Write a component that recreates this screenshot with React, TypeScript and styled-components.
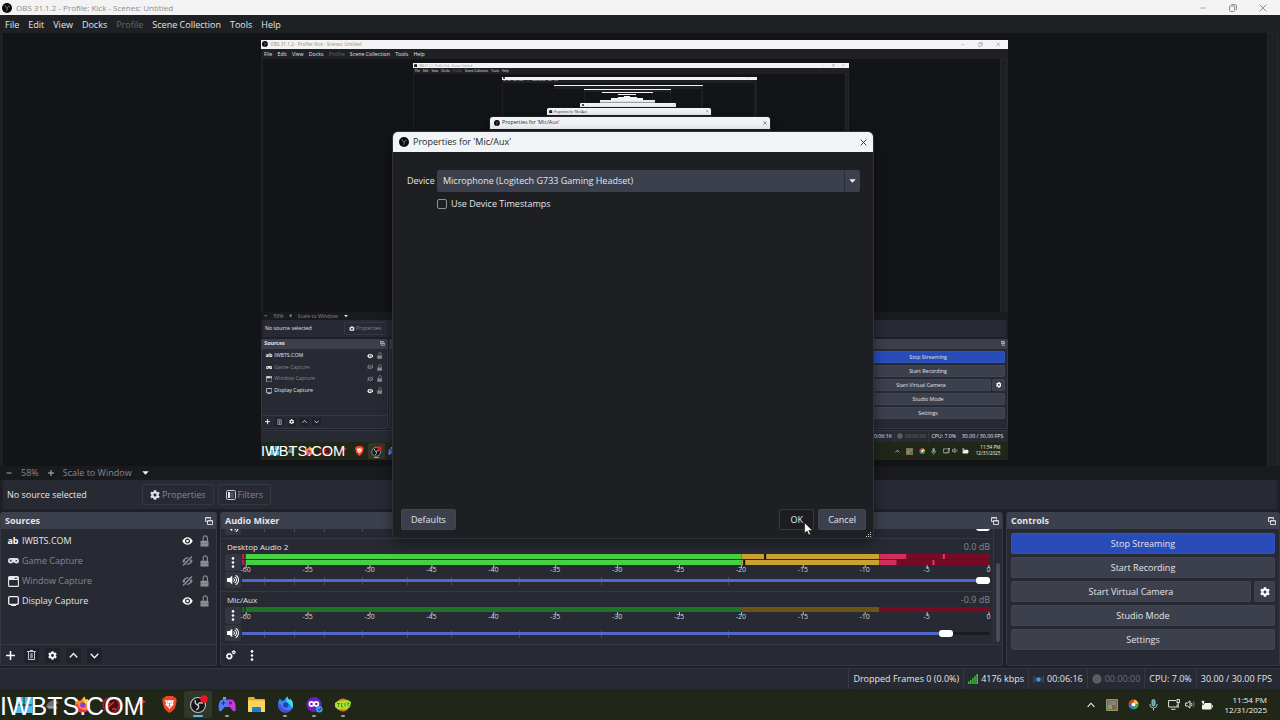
import React from "react";
import styled, { createGlobalStyle, css } from "styled-components";
import { FaCog, FaVolumeUp } from "react-icons/fa";

const c = {
  text: "#e4e5e9",
  dim: "#85878e",
  panel: "#272a33",
  raised: "#3c404d",
  line: "#353842",
  gap: "#1e2027",
  canvas: "#131418",
  menu: "#1e2024",
  accent: "#284cb8",
  slider: "#5267cb",
};

const GlobalStyle = createGlobalStyle`
  *, *::before, *::after { box-sizing: border-box; }
  body {
    margin: 0;
    background: ${c.gap};
    font-family: "Open Sans", "Noto Sans", sans-serif;
  }
  button, input, select { font: inherit; color: inherit; margin: 0; }
`;

/* ---------- desktop frame ---------- */

const Screen = styled.div<{ $nested: boolean }>`
  position: relative;
  display: flex;
  flex-direction: column;
  overflow: hidden;
  background: ${c.gap};
  color: ${c.text};
  font-size: 9px;
  line-height: 12px;
  ${(p) =>
    p.$nested
      ? css`
          width: 1280px;
          height: 720px;
          zoom: 0.5836;
        `
      : css`
          min-height: 100vh;
        `}
`;

const TitleBar = styled.header`
  display: flex;
  align-items: center;
  height: 15px;
  padding: 0 12px 0 2px;
  gap: 4px;
  background: #f3f3f3;
  color: #8b8b8b;
  font-size: 8px;
`;

const TitleText = styled.span`
  flex: 1;
  white-space: nowrap;
`;

const WindowButtons = styled.div`
  display: flex;
  gap: 20px;
`;

const BareButton = styled.button`
  display: flex;
  align-items: center;
  justify-content: center;
  min-width: 10px;
  padding: 0;
  border: 0;
  background: none;
`;

const MenuBar = styled.nav`
  display: flex;
  align-items: center;
  gap: 9px;
  height: 18px;
  padding: 1px 5px 0;
  background: ${c.menu};
`;

const MenuItem = styled.button<{ $off?: boolean }>`
  padding: 0;
  border: 0;
  background: none;
  white-space: nowrap;
  color: ${(p) => (p.$off ? "#66686d" : c.text)};
`;

/* ---------- preview ---------- */

const PreviewArea = styled.main`
  flex: 1;
  display: flex;
  min-height: 432px;
  padding: 0 2px 0 3px;
  background: ${c.menu};
`;

const Canvas = styled.div`
  flex: 1;
  display: flex;
  align-items: center;
  justify-content: center;
  padding: 1px 1px 0 0;
  background: ${c.canvas};
`;

const Gutter = styled.div<{ $plain: boolean }>`
  width: 11px;
  border: ${(p) => (p.$plain ? "0" : "1px solid #26272b")};
  border-bottom: 0;
`;

const ZoomBar = styled.div`
  display: flex;
  align-items: center;
  height: 14px;
  padding-left: 4px;
  gap: 7px;
  background: #191a1e;
  color: ${c.dim};
`;

const ZoomSelect = styled.select`
  width: 72px;
  padding: 0;
  border: 0;
  appearance: none;
  background: none;
  outline: none;
`;

const ContextBar = styled.div`
  display: flex;
  align-items: center;
  gap: 4px;
  height: 29px;
  margin: 0 3px 3px;
  padding-left: 4px;
  background: ${c.panel};
`;

const ContextLabel = styled.span`
  width: 131px;
`;

const GhostButton = styled.button`
  display: flex;
  align-items: center;
  justify-content: center;
  gap: 2px;
  height: 21px;
  padding: 0 7px;
  border: 1px solid ${c.line};
  border-radius: 2px;
  background: none;
  color: ${c.dim};
`;

/* ---------- docks ---------- */

const Docks = styled.div`
  display: grid;
  grid-template-columns: minmax(0, 217fr) minmax(0, 783fr) minmax(0, 274fr);
  gap: 3px;
  margin-bottom: 2px;
`;

const Dock = styled.section`
  display: flex;
  flex-direction: column;
  height: 154px;
  border: 1px solid ${c.line};
  border-top: 0;
  border-radius: 3px;
  background: ${c.panel};
  overflow: hidden;
`;

const DockHeader = styled.div`
  display: flex;
  align-items: center;
  justify-content: space-between;
  flex: none;
  height: 17px;
  padding: 0 2px 0 4px;
  background: ${c.raised};
`;

const DockTitle = styled.h2`
  margin: 0;
  font-size: 9px;
  font-weight: 700;
  line-height: 12px;
`;

const DockTools = styled.div`
  display: flex;
  align-items: center;
  height: 21px;
  gap: 6px;
  padding: 0 2px;
  border-top: 1px solid ${c.line};
`;

const ToolButton = styled(BareButton)<{ $shade?: boolean }>`
  width: 15px;
  height: 15px;
  border-radius: 2px;
  color: #f2f3f5;
  background: ${(p) => (p.$shade ? "#202229" : "none")};
`;

const SourceList = styled.ul`
  flex: 1;
  margin: 0;
  padding: 2px 7px 0 6px;
  list-style: none;
`;

const SourceRow = styled.li<{ $off: boolean }>`
  display: flex;
  align-items: center;
  height: 20px;
  gap: 3px;
  color: ${(p) => (p.$off ? c.dim : c.text)};
`;

const SourceIcon = styled.span`
  display: flex;
  justify-content: center;
  width: 12px;
  color: #fff;
  font-weight: 700;
`;

const SourceName = styled.span`
  flex: 1;
`;

const SourceToggles = styled.span`
  display: flex;
  gap: 6px;
`;

/* ---------- mixer ---------- */

const MixerBody = styled.div`
  flex: 1;
  display: flex;
  min-height: 0;
`;

const ChannelList = styled.div`
  flex: 1;
  display: flex;
  flex-direction: column;
  justify-content: flex-end;
  overflow: hidden;
  border-right: 1px solid ${c.line};
`;

const MixerScroll = styled.div`
  display: flex;
  align-items: flex-end;
  width: 8px;
  padding: 0 2px 2px;
  &::after {
    content: "";
    width: 4px;
    height: 79px;
    border-radius: 2px;
    background: #484c5a;
  }
`;

const Channel = styled.div`
  flex: none;
  height: 53px;
  padding: 2px 3px 0 4px;
  border-top: 1px solid ${c.line};
`;

const ChannelHead = styled.div`
  display: flex;
  justify-content: space-between;
  height: 13px;
  padding-left: 2px;
  font-size: 8px;
`;

const Level = styled.span`
  color: ${c.dim};
  font-size: 9px;
`;

const ChannelGrid = styled.div`
  display: grid;
  grid-template-columns: 16px minmax(0, 1fr);
  gap: 1px;
`;

const ChannelButtons = styled.div`
  display: grid;
  grid-template-rows: 17px 16px;
  gap: 1px;
`;

const ChannelButton = styled(BareButton)`
  border-radius: 2px;
  background: #343742;
  color: #fff;
`;

const ChannelMeters = styled.div`
  display: flex;
  flex-direction: column;
  justify-content: space-between;
`;

const MeterSvg = styled.svg`
  display: block;
  width: 100%;
  overflow: visible;
  font-size: 7px;
`;

const SliderBox = styled.div`
  position: relative;
  display: flex;
  height: 15px;
`;

const SliderTick = styled.i`
  position: absolute;
  top: 4px;
  width: 1px;
  height: 8px;
  background: #474b58;
`;

const Slider = styled.input<{ $fill: number }>`
  position: relative;
  width: 100%;
  height: 15px;
  appearance: none;
  background: linear-gradient(
      to right,
      ${c.slider} ${(p) => p.$fill}%,
      #1b1c21 ${(p) => p.$fill}%
    )
    center / 100% 3px no-repeat;
  &::-webkit-slider-thumb {
    appearance: none;
    width: 14px;
    height: 7px;
    border-radius: 3px;
    background: #fff;
  }
`;

/* ---------- controls ---------- */

const ControlList = styled.div`
  display: flex;
  flex-direction: column;
  gap: 3px;
  padding: 4px;
`;

const ControlRow = styled.div`
  display: flex;
  gap: 3px;
`;

const SolidButton = styled.button<{ $primary?: boolean; $grow?: boolean }>`
  display: flex;
  align-items: center;
  justify-content: center;
  height: 21px;
  flex: ${(p) => (p.$grow ? "1" : "none")};
  min-width: 21px;
  padding: 0 9px;
  border: 1px solid ${(p) => (p.$primary ? "#2f55c4" : "#414552")};
  border-radius: 2px;
  background: ${(p) => (p.$primary ? c.accent : c.raised)};
  color: ${c.text};
`;

const IconSolidButton = styled(SolidButton)`
  padding: 0;
`;

/* ---------- status + taskbar ---------- */

const StatusBar = styled.footer`
  display: flex;
  justify-content: flex-end;
  height: 21px;
  padding: 0 4px;
  border-top: 1px solid ${c.line};
  background: ${c.panel};
`;

const StatusCell = styled.span<{ $off?: boolean }>`
  display: flex;
  align-items: center;
  gap: 3px;
  padding: 0 4px;
  border-left: 1px solid ${c.line};
  white-space: nowrap;
  color: ${(p) => (p.$off ? "#6d6f76" : c.text)};
`;

const TaskBar = styled.div`
  position: relative;
  display: flex;
  align-items: center;
  justify-content: space-between;
  height: 31px;
  padding: 0 13px 0 10px;
  background: #212718;
`;

const TaskApps = styled.div`
  display: flex;
  gap: 1px;
`;

const TaskButton = styled.button<{ $active?: boolean; $open?: boolean }>`
  position: relative;
  display: flex;
  align-items: center;
  justify-content: center;
  width: 28px;
  height: 27px;
  padding: 0;
  border: 0;
  border-radius: 3px;
  background: ${(p) => (p.$active ? "#31372a" : "none")};
  &::after {
    content: "";
    position: absolute;
    bottom: 1px;
    width: ${(p) => (p.$active ? 10 : 4)}px;
    height: 2px;
    border-radius: 1px;
    background: ${(p) => (p.$active ? "#58b9e8" : p.$open ? "#9aa092" : "none")};
  }
`;

const Watermark = styled.span`
  position: absolute;
  left: 0;
  bottom: 0;
  font-family: "Liberation Sans", Arial, sans-serif;
  font-size: 25px;
  line-height: 27px;
  color: #fff;
`;

const Tray = styled.div`
  display: flex;
  align-items: center;
  gap: 10px;
  color: #f3f3ee;
`;

const TrayGroup = styled.div`
  display: flex;
  align-items: center;
  gap: 5px;
`;

const Clock = styled.time`
  margin-left: 2px;
  font-size: 8px;
  line-height: 10px;
  text-align: right;
`;

/* ---------- dialog ---------- */

const DialogWindow = styled.div<{ $far: boolean }>`
  position: absolute;
  left: 393px;
  top: 132px;
  display: flex;
  flex-direction: column;
  width: 480px;
  height: 406px;
  border-radius: 5px;
  background: ${(p) => (p.$far ? "#e9edef" : "#1e1f23")};
  overflow: hidden;
  box-shadow: ${(p) => (p.$far ? "none" : "0 0 0 1px #313237, 0 4px 14px rgba(0, 0, 0, 0.5)")};
`;

const DialogTitle = styled.div`
  display: flex;
  align-items: center;
  gap: 4px;
  flex: none;
  height: 20px;
  padding: 0 5px 0 6px;
  background: #f0f4f6;
  color: #26282a;
`;

const DialogBody = styled.div`
  flex: 1;
  display: grid;
  grid-template-columns: 26px minmax(0, 1fr);
  grid-auto-rows: max-content;
  align-items: center;
  gap: 6px 4px;
  padding: 18px 13px 0 14px;
`;

const SelectBox = styled.div`
  display: flex;
  align-items: center;
  height: 22px;
  border-radius: 2px;
  background: ${c.raised};
  padding-right: 4px;
`;

const DeviceSelect = styled.select`
  flex: 1;
  height: 22px;
  padding: 0 6px;
  border: 0;
  border-right: 1px solid #2b2e38;
  margin-right: 4px;
  appearance: none;
  background: none;
  outline: none;
`;

const CheckLabel = styled.label`
  grid-column: 2;
  display: flex;
  align-items: center;
  gap: 4px;
`;

const CheckBox = styled.input`
  width: 10px;
  height: 10px;
  appearance: none;
  border: 1px solid #8f9096;
  border-radius: 2px;
`;

const DialogFooter = styled.div`
  display: flex;
  gap: 4px;
  padding: 0 7px 8px 8px;
`;

const Spacer = styled.span`
  flex: 1;
`;

const OkButton = styled(SolidButton)`
  min-width: 35px;
  border-color: #36383e;
  background: #1c1d20;
`;

const Grip = styled.svg`
  position: absolute;
  right: 1px;
  bottom: 0;
`;

const Pointer = styled.svg`
  position: absolute;
  left: 804px;
  top: 522px;
`;

/* keeps the preview at its usual height in frames whose docks are out of sight */
const Below = styled.div`
  height: 254px;
`;

/* ---------- icons ---------- */

/* black disc with three curved blades meeting in the middle */
const ObsLogo = ({ size = 10 }: { size?: number }) => (
  <svg width={size} height={size} viewBox="0 0 24 24">
    <circle cx="12" cy="12" r="12" fill="#08080a" />
    <g fill="none" stroke="#8d9093" strokeWidth="1.8" strokeLinecap="round">
      <path d="M7.5 5.500c-.5 3.500 1.500 6 4.500 6.500" />
      <path d="M18.500 9.200c-3-1.900-6-.6-6.500 2.800" />
      <path d="M10 19.200c3.200-1.400 3.800-4.700 2-7.200" />
    </g>
  </svg>
);

const CloseIcon = ({ size = 8 }: { size?: number }) => (
  <svg width={size} height={size} viewBox="0 0 8 8" stroke="currentColor" fill="none">
    <path d="M.7.7l6.6 6.6M7.3.7L.7 7.3" />
  </svg>
);

const RestoreIcon = () => (
  <svg width="8" height="8" viewBox="0 0 8 8" stroke="currentColor" fill="none">
    <rect x=".5" y="2" width="5.2" height="5.5" rx="1" />
    <path d="M2.3.6h3.7q1.5 0 1.5 1.5v3.7" />
  </svg>
);

const FloatIcon = () => (
  <svg width="8" height="8" viewBox="0 0 8 8" stroke="#d5d6da" fill="none">
    <path d="M.5 4.5v-4h5v2M.5 1h5M2.5 7.5v-4h5v4zM2.5 4h5M.5 4.5h2" />
  </svg>
);

const Arrow = () => (
  <svg width="7" height="4" viewBox="0 0 7 4">
    <path d="M.3.2h6.4L3.5 3.8z" fill="#f2f2f4" />
  </svg>
);

const Minus = () => (
  <svg width="6" height="6" viewBox="0 0 6 6" stroke="#a5a6ab">
    <path d="M.5 3h5" />
  </svg>
);

const Plus = ({ size = 6, color = "#b8b9bd" }: { size?: number; color?: string }) => (
  <svg width={size} height={size} viewBox="0 0 6 6" stroke={color}>
    <path d="M0 3h6M3 0v6" />
  </svg>
);

const Chevron = ({ up, size = 9 }: { up?: boolean; size?: number }) => (
  <svg width={size} height={size} viewBox="0 0 9 9" fill="none" stroke="currentColor" strokeWidth="1.3">
    <path d={up ? "M.7 6.5l3.8-4 3.8 4" : "M.7 2.7l3.8 4 3.8-4"} />
  </svg>
);

const Trash = () => (
  <svg width="9" height="10" viewBox="0 0 9 10" fill="none" stroke="#c7c8cc">
    <path d="M0 1.5h9M1.500 2v7.500h6V2M3 .5h3" />
    <path d="M3.500 3.500h2v4.500h-2z" fill="#8f9096" stroke="#8f9096" strokeWidth=".6" />
  </svg>
);

const Dots = () => (
  <svg width="4" height="11" viewBox="0 0 4 11" fill="#fff">
    <circle cx="2" cy="1.4" r="1.3" />
    <circle cx="2" cy="5.5" r="1.3" />
    <circle cx="2" cy="9.6" r="1.3" />
  </svg>
);

const TwoGears = () => (
  <svg width="10" height="10" viewBox="0 0 10 10" fill="none" stroke="#fff">
    <circle cx="3.3" cy="6.3" r="2.2" strokeWidth="1.5" />
    <circle cx="3.3" cy="6.3" r="3" strokeWidth=".9" strokeDasharray="1.1 1.25" />
    <circle cx="7.8" cy="2.3" r="1.2" strokeWidth="1.1" />
    <circle cx="7.8" cy="2.3" r="1.8" strokeWidth=".5" strokeDasharray=".8 .6" />
  </svg>
);

const FiltersIcon = () => (
  <svg width="10" height="10" viewBox="0 0 10 10" fill="none" stroke="#c9cacd">
    <rect x=".5" y=".5" width="9" height="9" rx="1.2" />
    <path d="M2 2h2v6H2z" fill="#e8e8ea" stroke="none" />
    <path d="M5.2 2v6M7 2v6" stroke="#6d6f76" />
  </svg>
);

const GamepadIcon = () => (
  <svg width="11" height="6" viewBox="0 0 11 6">
    <path d="M2.7 0h5.6A2.7 2.7 0 0 1 8.3 5.400Q7.200 5.400 6.500 4.500h-2Q3.800 5.400 2.700 5.400A2.700 2.700 0 0 1 2.700 0z" fill="#dfe0e3" />
    <path d="M2.700 1.600v2.200M1.600 2.700h2.200" stroke={c.panel} strokeWidth=".7" />
    <circle cx="8.300" cy="2.700" r=".8" fill={c.panel} />
  </svg>
);

const WindowIcon = () => (
  <svg width="11" height="11" viewBox="0 0 11 11">
    <rect x=".6" y=".6" width="9.8" height="9.8" rx="1" fill="none" stroke="#e9eaec" strokeWidth="1.1" />
    <path d="M1 1h9v3H1z" fill="#e9eaec" />
    <path d="M6.5 2.3h2.6" stroke={c.panel} />
  </svg>
);

const MonitorIcon = () => (
  <svg width="11" height="10" viewBox="0 0 11 10">
    <rect x=".7" y=".7" width="9.6" height="7.6" rx="1.2" fill="none" stroke="#f4f4f6" strokeWidth="1.3" />
    <path d="M3 9.3h5" stroke="#f4f4f6" strokeWidth="1.2" />
  </svg>
);

const Eye = ({ off }: { off?: boolean }) => (
  <svg width="11" height="10" viewBox="0 0 11 10">
    <path d="M.3 5Q2.2 1.2 5.5 1.2T10.7 5Q8.8 8.8 5.5 8.8T.3 5z" fill={off ? "#85878e" : "#fff"} />
    <circle cx="5.5" cy="5" r="2.5" fill={c.panel} />
    <circle cx="5.5" cy="5" r="1.3" fill={off ? "#85878e" : "#fff"} />
    {off && (
      <>
        <path d="M1 9.5l9-9" stroke={c.panel} strokeWidth="2.6" />
        <path d="M1 9.5l9-9" stroke="#9a9ca2" strokeWidth="1.1" />
      </>
    )}
  </svg>
);

const Lock = () => (
  <svg width="9" height="12" viewBox="0 0 9 12">
    <path d="M3.2 6V3q0-2.2 2-2.2T7.4 3v3" fill="none" stroke="#85878e" strokeWidth="1.2" />
    <rect x=".5" y="5.8" width="8" height="5.7" rx=".6" fill="#8d8f95" />
    <path d="M1 8.6h7" stroke="#6c6e75" strokeWidth=".6" />
  </svg>
);

const Signal = () => (
  <svg width="10" height="10" viewBox="0 0 10 10" fill="#3fc43a">
    <path d="M0 7.5h1.4V10H0zM2.1 6h1.4v4H2.1zM4.2 4h1.4v6H4.2zM6.3 2h1.4v8H6.3zM8.4 0H10v10H8.4z" />
  </svg>
);

const Broadcast = () => (
  <svg width="11" height="9" viewBox="0 0 11 9" fill="none" stroke="#2d6fb0">
    <circle cx="5.5" cy="4.5" r="2.2" fill="#3f9df0" stroke="none" />
    <path d="M2.6 1.7q-1.3 2.8 0 5.6M8.4 1.7q1.3 2.8 0 5.6M.9.9q-1 3.6 0 7.2M10.1.9q1 3.6 0 7.2" strokeWidth=".6" />
  </svg>
);

const RecordDot = () => (
  <svg width="10" height="10" viewBox="0 0 10 10">
    <circle cx="5" cy="5" r="4.7" fill="#5b5d63" />
  </svg>
);

/* ---------- taskbar app icons ---------- */

const WindowsTile = () => (
  <svg width="16" height="16" viewBox="0 0 16 16" fill="#4bbdee">
    <path d="M0 0h7.5v7.5H0zM8.5 0H16v7.5H8.5zM0 8.5h7.5V16H0zM8.5 8.5H16V16H8.5z" />
  </svg>
);

const GreyApp = () => (
  <svg width="16" height="16" viewBox="0 0 16 16">
    <path d="M1 10Q3 3 10 3l4 3-5 2 4 4H4z" fill="#6b7075" />
    <path d="M3 10h9" stroke="#b7bcc0" />
  </svg>
);

const RedGauge = () => (
  <svg width="18" height="18" viewBox="0 0 18 18" fill="none">
    <circle cx="9" cy="9" r="7.8" fill="#4a1014" stroke="#a81c24" strokeWidth="1.6" />
    <path d="M5 12l7-6M5 6l3 2M10 13h4" stroke="#e0333a" strokeWidth="1.4" />
  </svg>
);

const RedKite = () => (
  <svg width="14" height="14" viewBox="0 0 14 14">
    <path d="M1 8L9 1l4 3-5 2z" fill="#d2323a" />
    <path d="M4 13l6-5" stroke="#6e1a1e" strokeWidth="2" />
  </svg>
);

/* flame-tailed globe: notched ears at the left, a tall tongue at the right */
const Fox = ({ cool }: { cool?: boolean }) => (
  <svg width="17" height="17" viewBox="0 0 17 17">
    <path
      d="M8.5 16.5A7.500 7.500 0 0 1 1 9c0-2.500.8-4.700 2-6.500l1.500 2.300 2.500-.3Q8 2 10.500.5q0 2 2 3.500l.8-1.200Q16 5.500 16 9a7.500 7.500 0 0 1-7.500 7.500z"
      fill={cool ? "#2c8df5" : "#ff8a1e"}
    />
    <path d="M10.500.5q0 2 2 3.500l.8-1.200Q16 5.500 16 9q0 2-1 3.500Q14 8 10 6.500 8.500 3 10.500.5z" fill={cool ? "#3fe0e0" : "#ffd23c"} />
    <path d="M1 9a7.500 7.500 0 0 0 14 3.700Q11 15 7 13 4 11.500 3.500 8z" fill={cool ? "#5b45d8" : "#ef2f5b"} />
    <circle cx="8.800" cy="9" r="2.700" fill={cool ? "#2540b0" : "#8a3fe0"} />
  </svg>
);

const BraveIcon = () => (
  <svg width="15" height="17" viewBox="0 0 15 17">
    <path d="M4 0h7l1.3 1.5 1.7.2.7 3-1.500 6.500Q12.500 13.500 7.500 17 2.500 13.500 1.800 11.200L.3 4.700l.7-3 1.700-.2z" fill="#f0452a" />
    <path d="M3 4l2.500.6 2-.6 2 .6L12 4l-1 3.500.6 1.200-2 1.800L7.500 13l-2.100-2.500-2-1.800.6-1.200z" fill="#fff" />
    <path d="M5 6.500l1.500.8M10 6.500l-1.500.8M7.500 7v3M6.300 10l1.200.8 1.200-.8" stroke="#f0452a" strokeWidth=".8" fill="none" />
  </svg>
);

const ObsTask = () => (
  <svg width="19" height="19" viewBox="0 0 19 19">
    <circle cx="9" cy="10" r="7.5" fill="#161618" stroke="#bfc1c2" strokeWidth="1.1" />
    <g fill="none" stroke="#c4c6c7" strokeWidth="1.5" strokeLinecap="round">
      <path d="M6.200 5.800c-.4 2.300.8 3.900 2.800 4.200" />
      <path d="M13.200 8.200c-2-1.200-3.900-.4-4.200 1.800" />
      <path d="M7.700 14.600c2.100-.9 2.500-3 1.300-4.600" />
    </g>
    <circle cx="15" cy="4" r="3.8" fill="#f3121a" />
  </svg>
);

const PadTask = () => (
  <svg width="18" height="15" viewBox="0 0 18 15">
    <path d="M5 2.500h4V10H6.500l-3 4q-2 1-2.700-1Q0 5 3 3z" fill="#4f7df0" />
    <path d="M9 2.500h4l2 .5q3 2 2.700 10-.7 2-2.700 1l-3-4H9z" fill="#c13ae0" />
    <path d="M5 0h3v2.500H5z" fill="#7d9bf5" />
    <path d="M3.500 6h4M5.500 4v4" stroke="#20306e" />
    <circle cx="12.5" cy="6" r="1.5" fill="#5a1a8a" />
  </svg>
);

const FolderIcon = () => (
  <svg width="17" height="15" viewBox="0 0 17 15">
    <path d="M0 1q0-1 1-1h5l1.5 2H16q1 0 1 1v11q0 1-1 1H1q-1 0-1-1z" fill="#e8a92c" />
    <path d="M0 3.5h17V14q0 1-1 1H1q-1 0-1-1z" fill="#ffd45e" />
    <path d="M4 15v-4q0-1 1-1h7q1 0 1 1v4z" fill="#1d7fc4" />
  </svg>
);

const LoopIcon = () => (
  <svg width="17" height="17" viewBox="0 0 17 17" fill="none">
    <circle cx="8" cy="8.5" r="7.6" fill="#6a1fc0" />
    <circle cx="5.5" cy="8" r="2.1" stroke="#fff" strokeWidth="1.6" />
    <circle cx="10.3" cy="8" r="2.1" stroke="#fff" strokeWidth="1.6" />
    <circle cx="13.3" cy="13.3" r="3.3" fill="#3d9ae6" />
    <path d="M12 13l1.3 1.4L15 12" stroke="#12365f" />
  </svg>
);

const LimeIcon = () => (
  <svg width="16" height="14" viewBox="0 0 16 14">
    <ellipse cx="8" cy="7" rx="6.5" ry="6.5" fill="#e8742a" />
    <path d="M0 5l3-2 10-1 3 2-1 5-3 2-9 .5L0 9z" fill="#a8e02c" />
    <path d="M2 5.500h3M3.500 5.500V9M6.500 5v4h1.500M10 5v3.500M12 5h2l-1.500 2L14 8.500" stroke="#3d7a14" fill="none" strokeWidth=".8" />
  </svg>
);

const TrayMosaic = () => (
  <svg width="12" height="12" viewBox="0 0 12 12">
    <path d="M.5.5h11v11H.5z" fill="#7a6d4a" stroke="#8a9a6a" />
    <path d="M2 2h4v4H2z" fill="#a86a7a" />
    <path d="M6 2h4v4H6z" fill="#6a8aa0" />
    <path d="M2 6h4v4H2z" fill="#7aa85a" />
    <path d="M6 6h4v4H6z" fill="#9a5a4a" />
  </svg>
);

const TrayWheel = () => (
  <svg width="11" height="11" viewBox="0 0 11 11" fill="none" strokeWidth="3">
    <path d="M5.5 2A3.5 3.5 0 0 1 9 5.5" stroke="#f5c021" />
    <path d="M9 5.5A3.5 3.5 0 0 1 5.5 9" stroke="#35b04a" />
    <path d="M5.5 9A3.5 3.5 0 0 1 2 5.5" stroke="#2a7fe8" />
    <path d="M2 5.5A3.5 3.5 0 0 1 5.5 2" stroke="#e33c2e" />
    <circle cx="5.5" cy="5.5" r="2" fill="#fff" stroke="none" />
  </svg>
);

const TrayMic = () => (
  <svg width="9" height="12" viewBox="0 0 9 12" fill="none" stroke="#8fc3c4">
    <rect x="3" y=".6" width="3" height="6.4" rx="1.5" fill="#4e9fa8" />
    <path d="M.8 5q0 4 3.7 4t3.7-4M4.500 9v2.500" />
  </svg>
);

const TrayNet = () => (
  <svg width="12" height="11" viewBox="0 0 12 11" fill="none" stroke="#dfe0da">
    <path d="M8 1.5H.6v6.500h8.500V5.500M3 10.300h4.500" />
    <rect x="9" y=".6" width="2.4" height="3" />
    <path d="M10.2 4v5" />
  </svg>
);

const TraySpeaker = () => (
  <svg width="11" height="9" viewBox="0 0 11 9" fill="none" stroke="#e6e7e1">
    <path d="M.6 3h2L5 .9v7.200L2.600 6h-2z" />
    <path d="M6.500 3q1 1.500 0 3" />
    <path d="M8.300 1.500q2 3 0 6" stroke="#777b70" />
  </svg>
);

const TrayBattery = () => (
  <svg width="12" height="10" viewBox="0 0 12 10">
    <rect x="1" y="3" width="9.5" height="6.5" rx="1.2" fill="#f3f3ee" />
    <path d="M11.3 5v2.5" stroke="#f3f3ee" />
    <path d="M0 .5h3.5v3L1.800 5z" fill="#f3f3ee" stroke="#212718" strokeWidth=".7" />
  </svg>
);

/* ---------- parts ---------- */

type Depth = { depth: number };

const MENUS = ["File", "Edit", "View", "Docks", "Profile", "Scene Collection", "Tools", "Help"];

const SOURCES = [
  { name: "IWBTS.COM", icon: <>ab</>, on: true },
  { name: "Game Capture", icon: <GamepadIcon />, on: false },
  { name: "Window Capture", icon: <WindowIcon />, on: false },
  { name: "Display Capture", icon: <MonitorIcon />, on: true },
];

const SLIDER_TICKS = [3, 7, 11, 16, 22, 28, 37, 48, 65];

const Header = ({ title }: { title: string }) => (
  <DockHeader>
    <DockTitle>{title}</DockTitle>
    <BareButton aria-label={`Float ${title}`}>
      <FloatIcon />
    </BareButton>
  </DockHeader>
);

const SourcesDock = () => (
  <Dock>
    <Header title="Sources" />
    <SourceList>
      {SOURCES.map((s) => (
        <SourceRow key={s.name} $off={!s.on}>
          <SourceIcon>{s.icon}</SourceIcon>
          <SourceName>{s.name}</SourceName>
          <SourceToggles>
            <BareButton aria-label={`Visibility of ${s.name}`}>
              <Eye off={!s.on} />
            </BareButton>
            <BareButton aria-label={`Lock ${s.name}`}>
              <Lock />
            </BareButton>
          </SourceToggles>
        </SourceRow>
      ))}
    </SourceList>
    <DockTools>
      <ToolButton aria-label="Add source"><Plus size={9} color="#fff" /></ToolButton>
      <ToolButton aria-label="Remove source" $shade><Trash /></ToolButton>
      <ToolButton aria-label="Source properties" $shade><FaCog size={9} /></ToolButton>
      <ToolButton aria-label="Move up" $shade><Chevron up /></ToolButton>
      <ToolButton aria-label="Move down" $shade><Chevron /></ToolButton>
    </DockTools>
  </Dock>
);

type Bar = { y: number; h: number; hot: number; black?: number; mark?: number };

const Meter = ({ bars, live }: { bars: Bar[]; live: boolean }) => {
  const height = bars.reduce((m, b) => Math.max(m, b.y + b.h), 0);
  return (
    <MeterSvg height={height + 8}>
      {bars.map((b) => (
        <g key={b.y}>
          <rect x="0%" y={b.y} width="0.3%" height={b.h} fill={live ? "#b02850" : "#1f6b25"} />
          <rect x="0.5%" y={b.y} width="66.3%" height={b.h} fill={live ? "#46d046" : "#1f7326"} />
          <rect x="66.8%" y={b.y} width="18.4%" height={b.h} fill={live ? "#cba232" : "#6d5414"} />
          <rect x="85.2%" y={b.y} width="14.8%" height={b.h} fill="#760b26" />
          {b.hot > 0 && <rect x="85.2%" y={b.y} width={`${b.hot}%`} height={b.h} fill="#d42d5c" />}
          {b.black && <rect x={`${b.black}%`} y={b.y} width="2" height={b.h} fill="#0c0c0c" />}
          {b.mark && <rect x={`${b.mark}%`} y={b.y} width="2" height={b.h} fill="#e03a66" />}
        </g>
      ))}
      {Array.from({ length: 13 }, (_, i) => {
        const x = `${0.5 + (i * 99.3) / 12}%`;
        return (
          <g key={i}>
            <rect x={x} y={height} width="1" height="3" fill="#b9bac0" />
            <text
              x={x}
              y={height + 7}
              fill="#d6d7db"
              textAnchor="middle"
            >
              {i === 12 ? "0" : `${-60 + i * 5}`}
            </text>
          </g>
        );
      })}
    </MeterSvg>
  );
};

const MixerChannel = (p: { name: string; level?: string; bars: Bar[]; live: boolean; value: number }) => (
  <Channel>
    <ChannelHead>
      {p.level && (
        <>
          <span>{p.name}</span>
          <Level>{p.level}</Level>
        </>
      )}
    </ChannelHead>
    <ChannelGrid>
      <ChannelButtons>
        <ChannelButton aria-label={`${p.name} options`}><Dots /></ChannelButton>
        <ChannelButton aria-label={`Mute ${p.name}`}><FaVolumeUp size={12} /></ChannelButton>
      </ChannelButtons>
      <ChannelMeters>
        {p.level ? <Meter bars={p.bars} live={p.live} /> : <span />}
        <SliderBox>
          {SLIDER_TICKS.map((t) => (
            <SliderTick key={t} style={{ left: `${t}%` }} />
          ))}
          <Slider
            type="range"
            aria-label={`${p.name} volume`}
            defaultValue={p.value}
            $fill={p.value}
          />
        </SliderBox>
      </ChannelMeters>
    </ChannelGrid>
  </Channel>
);

const MixerDock = ({ depth }: Depth) => (
  <Dock>
    <Header title="Audio Mixer" />
    {depth === 0 && (
      <>
        <MixerBody>
          <ChannelList>
            <MixerChannel name="Desktop Audio" bars={[]} live={false} value={100} />
            <MixerChannel
              name="Desktop Audio 2"
              level="0.0 dB"
              live
              value={100}
              bars={[
                { y: 0, h: 5, hot: 3.6, black: 69.8, mark: 93.7 },
                { y: 6, h: 5, hot: 2.3, black: 67, mark: 92.3 },
              ]}
            />
            <MixerChannel name="Mic/Aux" level="-0.9 dB" live={false} value={95} bars={[{ y: 0, h: 5, hot: 0 }]} />
          </ChannelList>
          <MixerScroll />
        </MixerBody>
        <DockTools>
          <ToolButton aria-label="Advanced audio properties"><TwoGears /></ToolButton>
          <ToolButton aria-label="Mixer menu"><Dots /></ToolButton>
        </DockTools>
      </>
    )}
  </Dock>
);

const ControlsDock = () => (
  <Dock>
    <Header title="Controls" />
    <ControlList>
      <SolidButton $primary>Stop Streaming</SolidButton>
      <SolidButton>Start Recording</SolidButton>
      <ControlRow>
        <SolidButton $grow>Start Virtual Camera</SolidButton>
        <IconSolidButton aria-label="Virtual camera settings"><FaCog size={10} color="#fff" /></IconSolidButton>
      </ControlRow>
      <SolidButton>Studio Mode</SolidButton>
      <SolidButton>Settings</SolidButton>
    </ControlList>
  </Dock>
);

const Status = () => (
  <StatusBar>
    <StatusCell>Dropped Frames 0 (0.0%)</StatusCell>
    <StatusCell><Signal />4176 kbps</StatusCell>
    <StatusCell><Broadcast />00:06:16</StatusCell>
    <StatusCell $off><RecordDot />00:00:00</StatusCell>
    <StatusCell>CPU: 7.0%</StatusCell>
    <StatusCell>30.00 / 30.00 FPS</StatusCell>
  </StatusBar>
);

const Taskbar = () => (
  <TaskBar>
    <TaskApps>
      <TaskButton aria-label="Start"><WindowsTile /></TaskButton>
      <TaskButton aria-label="Launcher"><GreyApp /></TaskButton>
      <TaskButton aria-label="Firefox"><Fox /></TaskButton>
      <TaskButton aria-label="Gauge"><RedGauge /></TaskButton>
      <TaskButton aria-label="Kite"><RedKite /></TaskButton>
      <TaskButton aria-label="Brave"><BraveIcon /></TaskButton>
      <TaskButton aria-label="OBS" $active><ObsTask /></TaskButton>
      <TaskButton aria-label="Games" $open><PadTask /></TaskButton>
      <TaskButton aria-label="Files"><FolderIcon /></TaskButton>
      <TaskButton aria-label="Firefox Developer" $open><Fox cool /></TaskButton>
      <TaskButton aria-label="Loop" $open><LoopIcon /></TaskButton>
      <TaskButton aria-label="Lime" $open><LimeIcon /></TaskButton>
    </TaskApps>
    <Watermark>IWBTS.COM</Watermark>
    <Tray>
      <BareButton aria-label="Hidden icons"><Chevron up size={8} /></BareButton>
      <TrayMosaic />
      <TrayWheel />
      <TrayMic />
      <TrayGroup>
        <TrayNet />
        <TraySpeaker />
        <TrayBattery />
      </TrayGroup>
      <Clock>
        11:54 PM
        <br />
        12/31/2025
      </Clock>
    </Tray>
  </TaskBar>
);

const PropertiesDialog = ({ depth }: Depth) => (
  <DialogWindow role="dialog" aria-label="Properties" $far={depth > 3}>
    <DialogTitle>
      {depth < 4 && (
        <>
          <ObsLogo />
          <TitleText>{depth < 3 && "Properties for 'Mic/Aux'"}</TitleText>
          <BareButton aria-label="Close dialog"><CloseIcon size={7} /></BareButton>
        </>
      )}
    </DialogTitle>
    {depth === 0 && (
      <>
        <DialogBody>
          <label htmlFor="device">Device</label>
          <SelectBox>
            <DeviceSelect id="device">
              <option>Microphone (Logitech G733 Gaming Headset)</option>
            </DeviceSelect>
            <Arrow />
          </SelectBox>
          <CheckLabel>
            <CheckBox type="checkbox" />
            Use Device Timestamps
          </CheckLabel>
        </DialogBody>
        <DialogFooter>
          <SolidButton>Defaults</SolidButton>
          <Spacer />
          <OkButton>OK</OkButton>
          <SolidButton>Cancel</SolidButton>
        </DialogFooter>
        <Grip width="6" height="6" viewBox="0 0 6 6" fill="#c9cacc">
          <path d="M4 0h1v1H4zM2 2h1v1H2zM4 2h1v1H4zM0 4h1v1H0zM2 4h1v1H2zM4 4h1v1H4z" />
        </Grip>
      </>
    )}
  </DialogWindow>
);

const MAX_DEPTH = 8;

const Desktop = ({ depth }: Depth) => (
  <Screen $nested={depth > 0}>
    <TitleBar>
      {depth < 4 && (
        <>
          <ObsLogo />
          <TitleText>{depth < 3 && "OBS 31.1.2 - Profile: Kick - Scenes: Untitled"}</TitleText>
          <WindowButtons>
            <BareButton aria-label="Minimize"><Minus /></BareButton>
            <BareButton aria-label="Restore"><RestoreIcon /></BareButton>
            <BareButton aria-label="Close"><CloseIcon /></BareButton>
          </WindowButtons>
        </>
      )}
    </TitleBar>
    <MenuBar>
      {depth < 4 &&
        MENUS.map((m) => (
          <MenuItem key={m} $off={m === "Profile"}>
            {m}
          </MenuItem>
        ))}
    </MenuBar>
    <PreviewArea>
      <Canvas>{depth < MAX_DEPTH && <Desktop depth={depth + 1} />}</Canvas>
      <Gutter $plain={depth > 2} />
    </PreviewArea>
    {depth > 1 ? (
      <Below />
    ) : (
      <>
        <ZoomBar>
          <BareButton aria-label="Zoom out"><Minus /></BareButton>
          <span>58%</span>
          <BareButton aria-label="Zoom in"><Plus /></BareButton>
          <ZoomSelect aria-label="Preview scaling">
            <option>Scale to Window</option>
          </ZoomSelect>
          <Arrow />
        </ZoomBar>
        <ContextBar>
          <ContextLabel>No source selected</ContextLabel>
          <GhostButton><FaCog size={10} color="#e0e1e4" />Properties</GhostButton>
          {depth === 0 && <GhostButton><FiltersIcon />Filters</GhostButton>}
        </ContextBar>
        <Docks>
          <SourcesDock />
          <MixerDock depth={depth} />
          <ControlsDock />
        </Docks>
        <Status />
        <Taskbar />
      </>
    )}
    <PropertiesDialog depth={depth} />
    {depth === 0 && (
      <Pointer width="9" height="14" viewBox="0 0 9 14">
        <path d="M.6.8v10.5l2.500-2.300 1.700 4 1.700-.8-1.700-3.800h3.500z" fill="#fff" stroke="#111" strokeWidth=".6" />
      </Pointer>
    )}
  </Screen>
);

export default function App() {
  return (
    <>
      <GlobalStyle />
      <Desktop depth={0} />
    </>
  );
}
